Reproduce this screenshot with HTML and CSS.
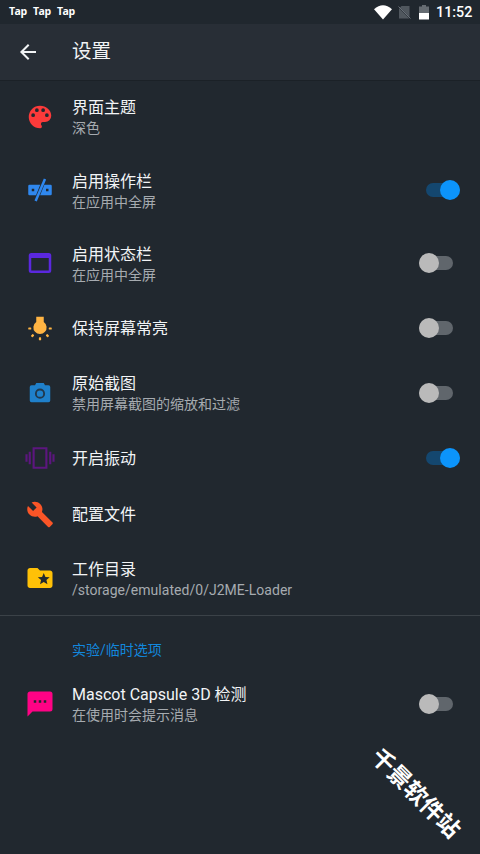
FILE: index.html
```html
<!DOCTYPE html>
<html lang="zh-CN">
<head>
<meta charset="utf-8">
<title>设置</title>
<link rel="stylesheet" href="styles.css">
</head>
<body>
<div class="screen">
  <div class="statusbar">
    <div class="taps"><span>Tap</span><span>Tap</span><span>Tap</span></div>
    <div class="status-icons">
      <svg class="wifi" width="18" height="15" viewBox="0 0 18 15"><path fill="#fff" d="M0 4.2Q9-3.600 18 4.200L9 14.500Z"/></svg>
      <svg class="sim" width="13" height="15" viewBox="0 0 13 15"><path fill="#50575e" d="M3.500 1H11.500V12L2 2.500ZM1 3L11.500 13.500H1Z"/><path d="M.5 1.500L12.500 13.500" stroke="#697078" stroke-width="1"/></svg>
      <svg class="battery" width="10" height="15" viewBox="0 0 10 15"><path fill="#666c72" d="M3 0H7V1.500H10V8H0V1.500H3Z"/><path fill="#fff" d="M0 8H10V14.500H0Z"/></svg>
      <span class="clock">11:52</span>
    </div>
  </div>
  <header class="toolbar">
    <svg class="back" width="24" height="24" viewBox="0 0 24 24"><path fill="none" stroke="#f1f3f5" stroke-width="2" d="M20 12H5.500M12.700 4.700L5.400 12L12.700 19.300"/></svg>
    <h1>设置</h1>
  </header>
  <main>
    <div class="row">
      <svg class="icon" viewBox="0 0 24 24"><path fill="#fc3a3a" d="M17.500 12A1.500 1.500 0 0 1 16 10.500A1.500 1.500 0 0 1 17.500 9A1.500 1.500 0 0 1 19 10.500A1.500 1.500 0 0 1 17.500 12M14.500 8A1.500 1.500 0 0 1 13 6.500A1.500 1.500 0 0 1 14.500 5A1.500 1.500 0 0 1 16 6.500A1.500 1.500 0 0 1 14.500 8M9.500 8A1.500 1.500 0 0 1 8 6.500A1.500 1.500 0 0 1 9.500 5A1.500 1.500 0 0 1 11 6.500A1.500 1.500 0 0 1 9.500 8M6.500 12A1.500 1.500 0 0 1 5 10.500A1.500 1.500 0 0 1 6.500 9A1.500 1.500 0 0 1 8 10.500A1.500 1.500 0 0 1 6.500 12M12 3A9 9 0 0 0 3 12A9 9 0 0 0 12 21A1.500 1.500 0 0 0 13.500 19.500C13.500 19.110 13.350 18.760 13.110 18.500C12.880 18.230 12.730 17.880 12.730 17.500A1.500 1.500 0 0 1 14.230 16H16A5 5 0 0 0 21 11C21 6.580 16.970 3 12 3Z"/></svg>
      <div class="text"><div class="title">界面主题</div><div class="sub">深色</div></div>
    </div>
    <div class="row">
      <svg class="icon" viewBox="0 0 24 24"><path fill="#2f87ee" fill-rule="evenodd" d="M3.600 7.800H12.200L8.800 16.200H3.600Q2.600 16.200 2.600 15.200V8.800Q2.600 7.800 3.600 7.800ZM5.400 11V13H7.400V11ZM15.500 7.800H20.400Q21.400 7.800 21.400 8.800V15.200Q21.400 16.200 20.400 16.200H12.100ZM16.800 11V13H18.800V11Z"/><path d="M16 3.200L8.500 20.800" stroke="#2f87ee" stroke-width="2"/></svg>
      <div class="text"><div class="title">启用操作栏</div><div class="sub">在应用中全屏</div></div>
      <span class="switch on"></span>
    </div>
    <div class="row">
      <svg class="icon" viewBox="0 0 24 24"><path fill="#5b28df" fill-rule="evenodd" d="M5 4H19A2 2 0 0 1 21 6V18A2 2 0 0 1 19 20H5A2 2 0 0 1 3 18V6A2 2 0 0 1 5 4ZM5 8V18H19V8Z"/></svg>
      <div class="text"><div class="title">启用状态栏</div><div class="sub">在应用中全屏</div></div>
      <span class="switch"></span>
    </div>
    <div class="row single">
      <svg class="icon" viewBox="0 0 24 24"><g fill="#ffb443"><path d="M9 3H15V7.200A5.300 5.300 0 1 1 9 7.200Z"/><rect x="2.600" y="11.500" width="2.400" height="1.700" rx=".5"/><rect x="19" y="11.500" width="2.400" height="1.700" rx=".5"/><rect x="11.100" y="19.400" width="1.800" height="2.400" rx=".5"/><rect x="4.900" y="17.300" width="2.300" height="1.800" rx=".5" transform="rotate(-45 6 18.200)"/><rect x="16.800" y="17.300" width="2.300" height="1.800" rx=".5" transform="rotate(45 18 18.200)"/></g></svg>
      <div class="text"><div class="title">保持屏幕常亮</div></div>
      <span class="switch"></span>
    </div>
    <div class="row">
      <svg class="icon" viewBox="0 0 24 24"><path fill="#1f80cb" d="M9 4L8 5.800H5.200A1.400 1.400 0 0 0 3.800 7.200V18A1.400 1.400 0 0 0 5.200 19.400H18.800A1.400 1.400 0 0 0 20.200 18V7.200A1.400 1.400 0 0 0 18.800 5.800H16L15 4Z"/><circle cx="12" cy="12.500" r="3.300" fill="none" stroke="#21384d" stroke-width="1.500"/></svg>
      <div class="text"><div class="title">原始截图</div><div class="sub">禁用屏幕截图的缩放和过滤</div></div>
      <span class="switch"></span>
    </div>
    <div class="row single">
      <svg class="icon" viewBox="0 0 24 24"><path fill="none" stroke="#5c167f" stroke-width="1.700" d="M6.900 4.200H17.100V19.800H6.900ZM3.800 7V17M20.200 7V17M1.200 9V15M22.800 9V15"/></svg>
      <div class="text"><div class="title">开启振动</div></div>
      <span class="switch on"></span>
    </div>
    <div class="row single">
      <svg class="icon" viewBox="0 0 24 24"><path fill="#fa5527" transform="translate(.9 1.200) scale(.93)" d="M22.700 19L13.600 9.900C14.500 7.600 14 4.900 12.100 3C10.100 1 7.100.6 4.700 1.700L9 6L6 9L1.600 4.700C.4 7.100.9 10.100 2.900 12.100C4.800 14 7.500 14.500 9.800 13.600L18.900 22.700C19.300 23.100 19.900 23.100 20.300 22.700L22.600 20.400C23.100 20 23.100 19.300 22.700 19Z"/></svg>
      <div class="text"><div class="title">配置文件</div></div>
    </div>
    <div class="row">
      <svg class="icon" viewBox="0 0 24 24"><path fill="#ffc107" d="M20 6H12L10 4H4C2.900 4 2 4.900 2 6V18C2 19.100 2.900 20 4 20H20C21.100 20 22 19.100 22 18V8C22 6.900 21.100 6 20 6M17.940 17L15 15.280L12.060 17L12.840 13.670L10.250 11.430L13.660 11.140L15 8L16.340 11.140L19.750 11.430L17.160 13.670L17.940 17Z"/></svg>
      <div class="text"><div class="title">工作目录</div><div class="sub path">/storage/emulated/0/J2ME-Loader</div></div>
    </div>
    <h2 class="section">实验/临时选项</h2>
    <div class="row">
      <svg class="icon" viewBox="0 0 24 24"><path fill="#ff0285" fill-rule="evenodd" d="M20 2A2 2 0 0 1 22 4V16A2 2 0 0 1 20 18H6L2 22V4C2 2.890 2.900 2 4 2ZM7 9V11H9V9ZM11 9V11H13V9ZM15 9V11H17V9Z"/></svg>
      <div class="text"><div class="title">Mascot Capsule 3D 检测</div><div class="sub">在使用时会提示消息</div></div>
      <span class="switch"></span>
    </div>
  </main>
  <div class="watermark">千景软件站</div>
</div>
</body>
</html>
```
FILE: styles.css
```css
* { box-sizing: border-box; }

body {
  margin: 0;
  background: #21282f;
  font-family: Roboto, "Noto Sans CJK SC", sans-serif;
}

.screen {
  position: relative;
  width: 480px;
  height: 854px;
  overflow: hidden;
}

.statusbar {
  display: flex;
  justify-content: space-between;
  height: 24px;
  padding: 0 8px 0 9px;
  background: #20272e;
  color: #fff;
}

.taps {
  display: flex;
  gap: 6px;
  font: bold 10.500px/23px "Open Sans", sans-serif;
}

.taps span { width: 18px; letter-spacing: -0.5px; }

.status-icons {
  display: flex;
  align-items: center;
}

.wifi { margin-right: 6px; }
.sim { margin-right: 8px; }
.battery { margin-right: 7px; }

.clock {
  width: 36px;
  font-size: 14.300px;
  font-weight: 500;
  line-height: 25px;
}

.toolbar {
  display: flex;
  align-items: center;
  height: 57px;
  padding: 0 16px;
  background: #282e36;
  border-bottom: 1px solid #1b2127;
}

.toolbar h1 {
  margin: 0 0 0 32px;
  color: #f1f3f5;
  font-size: 19.500px;
  font-weight: 400;
  line-height: 28px;
}

main { margin-top: -1px; }

.row {
  display: flex;
  align-items: center;
  height: 73.400px;
  padding: 0 20px 0 25px;
}

.row.single { height: 56px; }

.icon {
  flex: none;
  width: 30px;
  height: 30px;
  margin-right: 17px;
}

.text {
  flex: 1;
  padding-top: 3px;
}

.single .text { padding-top: 1px; }

.title {
  color: #f2f4f6;
  font-size: 16px;
  line-height: 21px;
}

.sub {
  color: #a6abb0;
  font-size: 14px;
  line-height: 21px;
}

.path { letter-spacing: 0.03px; }

.switch {
  position: relative;
  width: 34px;
  height: 14px;
  margin-right: 7px;
  border-radius: 7px;
  background: #60666c;
}

.switch::after {
  content: "";
  position: absolute;
  top: -3px;
  left: 0;
  width: 20px;
  height: 20px;
  border-radius: 50%;
  background: #bababa;
}

.switch.on {
  margin-right: 0;
  background: #14476f;
}

.switch.on::after {
  left: 14px;
  background: #0c94fb;
}

.section {
  height: 52px;
  margin: 0;
  padding: 17px 0 0 72px;
  border-top: 1px solid #3b4248;
  color: #1287dd;
  font-size: 14px;
  font-weight: 400;
  line-height: 34px;
}

.watermark {
  position: absolute;
  left: 355px;
  top: 778px;
  width: 120px;
  color: #fff;
  font-size: 23px;
  font-weight: 700;
  line-height: 32px;
  text-align: center;
  white-space: nowrap;
  transform: rotate(45deg);
}
```
